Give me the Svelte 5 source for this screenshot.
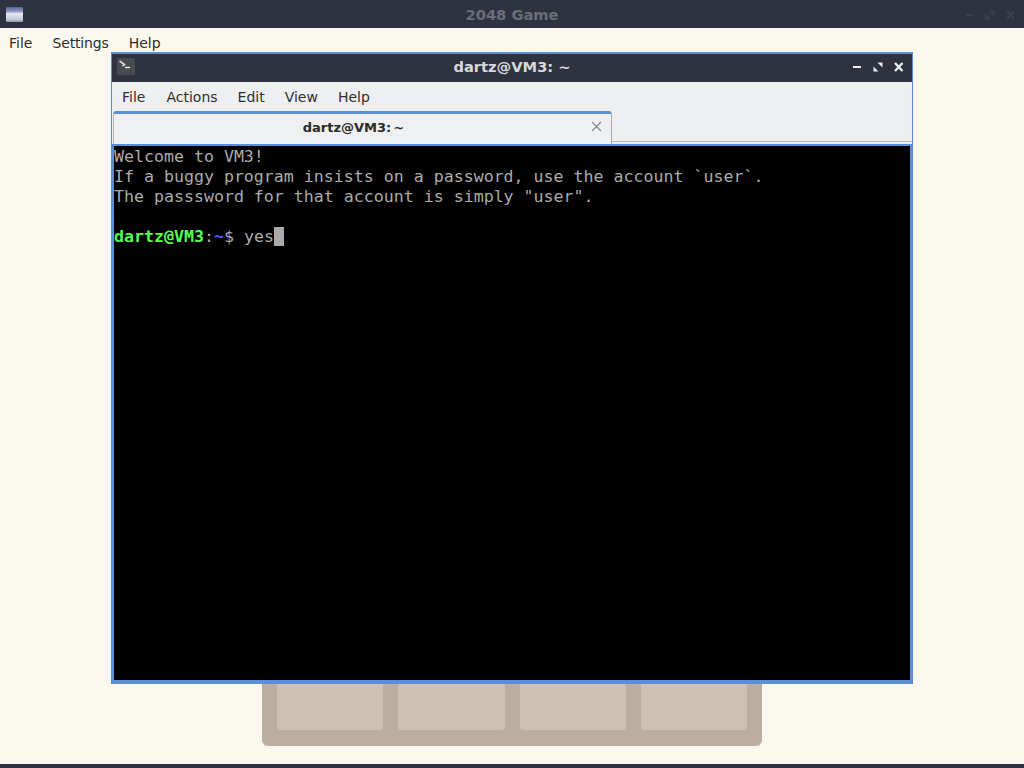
<script>
  const gameMenu = ['File', 'Settings', 'Help'];
  const termMenu = ['File', 'Actions', 'Edit', 'View', 'Help'];
</script>

<div class="screen">
  <header class="titlebar">
    <svg class="app-icon" width="17" height="15" viewBox="0 0 17 15">
      <defs>
        <linearGradient id="ai" x1="0" y1="0" x2="0" y2="1">
          <stop offset="0" stop-color="#56649a" />
          <stop offset="0.3" stop-color="#8f9cc0" />
          <stop offset="0.45" stop-color="#e6e9f0" />
          <stop offset="0.85" stop-color="#c3c8d4" />
          <stop offset="1" stop-color="#8a90a4" />
        </linearGradient>
      </defs>
      <rect x="0" y="0" width="17" height="15" rx="1" fill="url(#ai)" />
    </svg>
    <span class="title">2048 Game</span>
    <div class="controls">
      <svg width="60" height="14" viewBox="0 0 60 14">
        <path d="M4 7h7" stroke="#3c404d" stroke-width="2" />
        <path d="M24 11l3-3M29 6l3-3M24 6v5h5M27 3h5v5" stroke="#3c404d" stroke-width="1.6" fill="none" />
        <path d="M45 3l7 8M52 3l-7 8" stroke="#3c404d" stroke-width="2.4" />
      </svg>
    </div>
  </header>

  <nav class="menubar">
    {#each gameMenu as item}
      <span>{item}</span>
    {/each}
  </nav>

  <main class="game">
    <div class="board">
      <div class="tile"></div>
      <div class="tile"></div>
      <div class="tile"></div>
      <div class="tile"></div>
    </div>
  </main>

  <div class="bottom"></div>

  <section class="window">
    <div class="win-title">
      <svg class="term-icon" width="18" height="17" viewBox="0 0 18 17">
        <rect width="18" height="17" rx="1.5" fill="#4a4b4f" />
        <path d="M2.5 3l5 3.5-2 1.5" fill="none" stroke="#d8d8d8" stroke-width="1.6" />
        <path d="M8 9.5h5" stroke="#e8e8e8" stroke-width="1.4" />
      </svg>
      <span class="win-name">dartz@VM3: ~</span>
      <div class="win-buttons">
        <svg width="58" height="14" viewBox="0 0 58 14">
          <path d="M1 7h8" stroke="#eceef2" stroke-width="2" />
          <path d="M21.5 11.5v-5l5 5zM30.5 2.5v5l-5-5z" fill="#eceef2" />
          <path d="M43 3l7.5 8M50.5 3L43 11" stroke="#eceef2" stroke-width="2.4" />
        </svg>
      </div>
    </div>
    <nav class="win-menu">
      {#each termMenu as item}
        <span>{item}</span>
      {/each}
    </nav>
    <div class="tabs">
      <div class="tab">
        <span class="tab-label">dartz@VM3: ~</span>
        <svg class="tab-close" width="11" height="11" viewBox="0 0 11 11">
          <path d="M1 1l9 9M10 1l-9 9" stroke="#85868a" stroke-width="1.2" />
        </svg>
      </div>
      <div class="tab-fill"></div>
    </div>
    <pre class="terminal">Welcome to VM3!
If a buggy program insists on a password, use the account `user`.
The passsword for that account is simply "user".

<span class="green">dartz@VM3</span><span>:</span><span class="blue">~</span>$ yes<span class="cursor"> </span></pre>
  </section>
</div>

<style>
  :global(body) {
    margin: 0;
    background: #fbf8ef;
  }
  .screen {
    position: relative;
    width: 1024px;
    height: 768px;
    overflow: hidden;
    display: flex;
    flex-direction: column;
    background: #fbf8ef;
    font-family: "DejaVu Sans", sans-serif;
  }
  .titlebar {
    height: 28px;
    flex: none;
    background: #2f3340;
    display: flex;
    align-items: center;
    justify-content: center;
    position: relative;
  }
  .app-icon {
    position: absolute;
    left: 6px;
    top: 7px;
  }
  .title {
    font-size: 14.67px;
    font-weight: 700;
    color: #6b6e78;
  }
  .controls {
    position: absolute;
    right: 2px;
    top: 8px;
    line-height: 0;
  }
  .menubar {
    flex: none;
    height: 30px;
    display: flex;
    gap: 20px;
    padding-left: 9px;
    font-size: 14px;
    color: #2e2e2e;
    line-height: 30px;
  }
  .menubar span:nth-child(2) {
    letter-spacing: -0.15px;
  }
  .game {
    flex: 1;
    display: flex;
    justify-content: center;
    align-items: flex-end;
    padding-bottom: 18px;
  }
  .board {
    width: 500px;
    box-sizing: border-box;
    height: 140px;
    padding: 0 15px 16px;
    background: #bbae9f;
    border-radius: 6px;
    display: grid;
    grid-template-columns: repeat(4, 1fr);
    gap: 15px;
    align-items: end;
  }
  .tile {
    height: 100%;
    background: #cdc1b1;
    border-radius: 3px;
  }
  .bottom {
    flex: none;
    height: 4px;
    background: #2f3340;
  }
  .window {
    position: absolute;
    left: 111px;
    top: 52px;
    width: 802px;
    height: 632px;
    box-sizing: border-box;
    border: 1px solid #5a8fd6;
    border-top-width: 2px;
    display: flex;
    flex-direction: column;
    background: #eeeff0;
  }
  .win-title {
    flex: none;
    height: 28px;
    background: #2f3340;
    position: relative;
    display: flex;
    align-items: center;
    justify-content: center;
  }
  .term-icon {
    position: absolute;
    left: 5px;
    top: 4px;
  }
  .win-name {
    font-size: 14.67px;
    font-weight: 700;
    color: #d6d8dd;
    position: relative;
    top: -2px;
  }
  .win-buttons {
    position: absolute;
    right: 2px;
    top: 6px;
    line-height: 0;
  }
  .win-menu {
    flex: none;
    height: 29px;
    display: flex;
    gap: 20px;
    padding-left: 10px;
    font-size: 14px;
    line-height: 30px;
    color: #2e2e2e;
    background: #eeeff0;
  }
  .win-menu span:first-child {
    margin-right: 1px;
  }
  .tabs {
    flex: none;
    height: 33px;
    display: flex;
    align-items: flex-start;
    background: #eeeff0;
  }
  .tab {
    flex: none;
    width: 499px;
    height: 33px;
    box-sizing: border-box;
    margin-left: 1px;
    border-top: 3px solid #5a8fd6;
    border-left: 1px solid #b5b5b5;
    border-right: 1px solid #a5a5a5;
    border-radius: 3px 3px 0 0;
    background: #eff0f1;
    position: relative;
    text-align: center;
    padding-right: 18px;
    font-size: 13px;
    font-weight: 700;
    word-spacing: -2.5px;
    color: #2a2a2a;
    line-height: 27px;
  }
  .tab-close {
    position: absolute;
    right: 9px;
    top: 7px;
  }
  .tab-fill {
    flex: 1;
    height: 31px;
    box-sizing: border-box;
    border-bottom: 1px solid #b5b5b5;
  }
  .terminal {
    flex: 1;
    margin: 0;
    background: #000;
    box-sizing: border-box;
    min-height: 0;
    border: 2px solid #5a8fd6;
    border-bottom-width: 3px;
    color: #aaaaaa;
    font-family: "DejaVu Sans Mono", monospace;
    font-size: 16.6px;
    line-height: 20px;
    padding-top: 1px;
  }
  .green {
    color: #55ff55;
    font-weight: 700;
  }
  .blue {
    color: #5555ff;
    font-weight: 700;
  }
  .cursor {
    background: #aaaaaa;
  }
</style>
